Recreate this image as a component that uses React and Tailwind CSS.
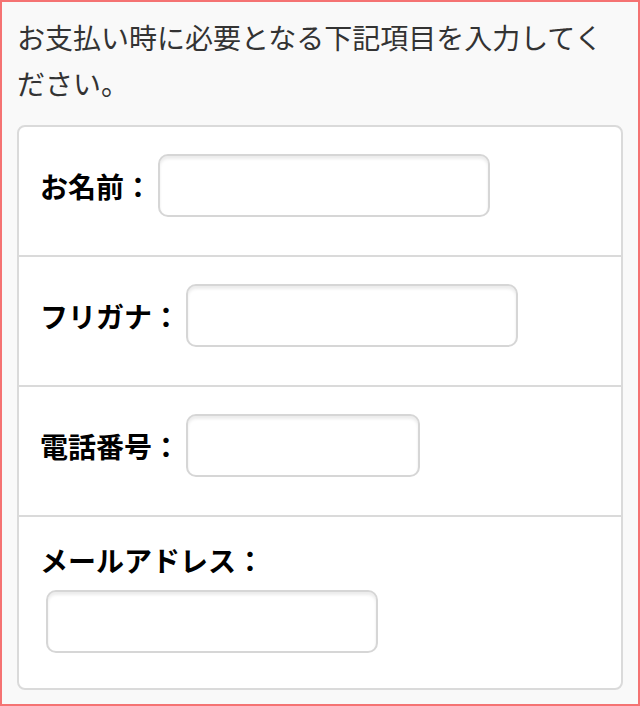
export default function App() {
  const font = { fontFamily: '"Noto Sans CJK JP", "Noto Sans", sans-serif' };
  const inputCls =
    "h-[63px] rounded-[10px] border-2 border-[#d6d6d6] bg-white shadow-[inset_0_3px_3px_rgba(0,0,0,0.08)] outline-none box-border";
  return (
    <div
      className="w-[640px] h-[706px] box-border border-2 border-[#f57373] bg-[#f9f9f9] overflow-hidden"
      style={font}
    >
      <p className="px-[15px] pt-[12px] text-[28px] leading-[46px] text-[#333333]">
        お支払い時に必要となる下記項目を入力してください。
      </p>
      <div className="mx-[15px] mt-[19px] rounded-[8px] border-2 border-[#dadada] bg-white">
        <div className="flex items-center gap-[6px] px-[21px] pt-[27px] pb-[38px] border-b-2 border-[#dadada]">
          <span className="text-[28px] font-bold text-black leading-[46px]">お名前：</span>
          <input className={`${inputCls} w-[332px]`} />
        </div>
        <div className="flex items-center gap-[6px] px-[21px] pt-[27px] pb-[38px] border-b-2 border-[#dadada]">
          <span className="text-[28px] font-bold text-black leading-[46px]">フリガナ：</span>
          <input className={`${inputCls} w-[332px]`} />
        </div>
        <div className="flex items-center gap-[6px] px-[21px] pt-[27px] pb-[38px] border-b-2 border-[#dadada]">
          <span className="text-[28px] font-bold text-black leading-[46px]">電話番号：</span>
          <input className={`${inputCls} w-[234px]`} />
        </div>
        <div className="flex flex-col items-start px-[21px] pt-[20px] pb-[35px]">
          <span className="text-[28px] font-bold text-black leading-[46px]">メールアドレス：</span>
          <input className={`${inputCls} w-[332px] mt-[7px] ml-[6px]`} />
        </div>
      </div>
    </div>
  );
}
